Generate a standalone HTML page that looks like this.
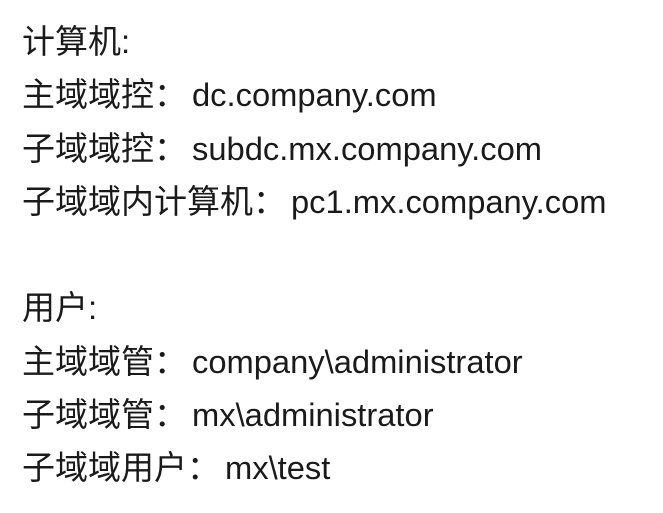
<!DOCTYPE html>
<html><head><meta charset="utf-8"><style>
html,body{margin:0;padding:0;background:#fff;width:663px;height:513px;overflow:hidden}
.t{position:absolute;left:22px;top:15px;font-family:"Liberation Sans","Noto Sans CJK SC",sans-serif;font-size:33px;line-height:53.3px;color:#1a1a1a;white-space:pre}
.l{margin-left:5px;font-size:32.7px}
</style></head><body>
<div class="t">计算机:
主域域控：<span class="l">dc.company.com</span>
子域域控：<span class="l">subdc.mx.company.com</span>
子域域内计算机：<span class="l">pc1.mx.company.com</span>

用户:
主域域管：<span class="l">company\administrator</span>
子域域管：<span class="l">mx\administrator</span>
子域域用户：<span class="l">mx\test</span></div>
</body></html>
